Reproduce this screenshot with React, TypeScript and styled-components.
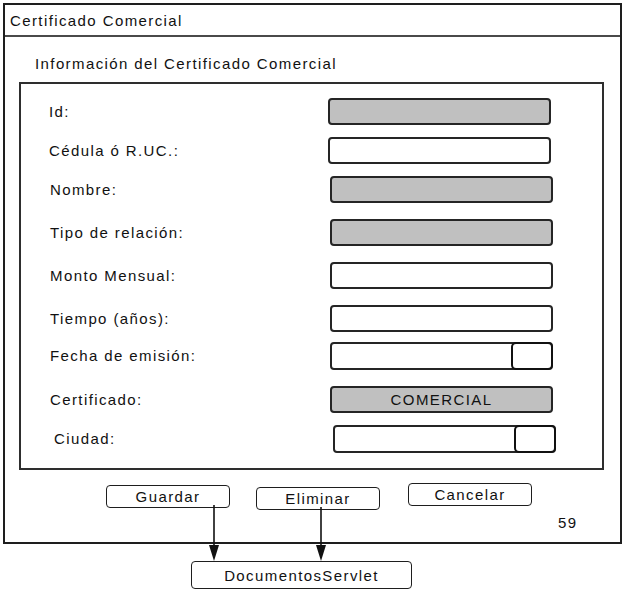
import React from 'react';
import styled, { createGlobalStyle } from 'styled-components';

const GlobalStyle = createGlobalStyle`
	html, body {
		margin: 0;
		padding: 0;
		background: #ffffff;
	}
	body {
		font-family: 'Liberation Sans', Arial, sans-serif;
		color: #111111;
		letter-spacing: 1.4px;
	}
`;

const Styled = {
	Page: styled.div`
		position: relative;
		width: 624px;
		height: 590px;
		padding: 3px 0 0 3px;
		box-sizing: border-box;
	`,
	Window: styled.div`
		width: 619px;
		height: 541px;
		border: 2px solid #1e1e1e;
		box-sizing: border-box;
		display: flex;
		flex-direction: column;
	`,
	TitleBar: styled.div`
		height: 30px;
		display: flex;
		align-items: center;
		padding-left: 5px;
		border-bottom: 2px solid #4a4a4a;
		font-size: 15px;
	`,
	Subtitle: styled.div`
		margin: 18px 0 0 30px;
		height: 18px;
		line-height: 18px;
		font-size: 15px;
	`,
	Panel: styled.div`
		margin: 9px 0 0 14px;
		width: 585px;
		height: 388px;
		border: 2px solid #2e2e2e;
		box-sizing: border-box;
		display: flex;
		flex-direction: column;
	`,
	Row: styled.div<{ $gap: number }>`
		display: flex;
		align-items: center;
		margin-top: ${props => props.$gap}px;
		height: 27px;
	`,
	Label: styled.div<{ $indent: number }>`
		width: ${props => 279 - props.$indent}px;
		padding-left: ${props => 28 + props.$indent}px;
		font-size: 15px;
		flex-shrink: 0;
		white-space: nowrap;
	`,
	Field: styled.div<{ $shift: number; $filled?: boolean }>`
		margin-left: ${props => props.$shift}px;
		width: 223px;
		height: 27px;
		border: 2px solid #252525;
		border-radius: 4px;
		box-sizing: border-box;
		background: ${props => (props.$filled ? '#c0c0c0' : '#ffffff')};
		display: flex;
		align-items: center;
		justify-content: center;
		font-size: 15px;
	`,
	PickerField: styled.div<{ $shift: number }>`
		margin-left: ${props => props.$shift}px;
		width: 223px;
		height: 28px;
		border: 2px solid #252525;
		border-radius: 4px;
		box-sizing: border-box;
		display: flex;
		justify-content: flex-end;
	`,
	PickerButton: styled.div`
		width: 42px;
		height: 28px;
		margin: -2px -2px -2px 0;
		border: 2px solid #111111;
		border-radius: 5px;
		box-sizing: border-box;
		background: #ffffff;
	`,
	ButtonRow: styled.div`
		display: flex;
		align-items: flex-start;
		margin: 13px 0 0 101px;
		height: 27px;
	`,
	Button: styled.div<{ $offset: number; $gap: number }>`
		margin-top: ${props => props.$offset}px;
		margin-left: ${props => props.$gap}px;
		width: 124px;
		height: 23px;
		border: 1.5px solid #1e1e1e;
		border-radius: 4px;
		box-sizing: border-box;
		display: flex;
		align-items: center;
		justify-content: center;
		font-size: 15px;
		background: #ffffff;
	`,
	PageNumber: styled.div`
		margin: 4px 0 0 553px;
		font-size: 15px;
		line-height: 18px;
	`,
	Servlet: styled.div`
		margin: 17px 0 0 188px;
		width: 221px;
		height: 28px;
		border: 1.5px solid #1e1e1e;
		border-radius: 4px;
		box-sizing: border-box;
		display: flex;
		align-items: center;
		justify-content: center;
		font-size: 15px;
	`,
	Arrows: styled.svg`
		position: absolute;
		left: 0;
		top: 0;
		pointer-events: none;
	`,
};

type FieldRow = {
	label: string;
	gap: number;
	indent: number;
	shift: number;
	kind: 'filled' | 'empty' | 'picker';
	value?: string;
};

const rows: Array<FieldRow> = [
	{ label: 'Id:', gap: 14, indent: 0, shift: 0, kind: 'filled' },
	{ label: 'Cédula ó R.UC.:', gap: 12, indent: 0, shift: 0, kind: 'empty' },
	{ label: 'Nombre:', gap: 12, indent: 1, shift: 2, kind: 'filled' },
	{ label: 'Tipo de relación:', gap: 16, indent: 1, shift: 2, kind: 'filled' },
	{ label: 'Monto Mensual:', gap: 16, indent: 1, shift: 2, kind: 'empty' },
	{ label: 'Tiempo (años):', gap: 16, indent: 1, shift: 2, kind: 'empty' },
	{ label: 'Fecha de emisión:', gap: 10, indent: 1, shift: 2, kind: 'picker' },
	{ label: 'Certificado:', gap: 17, indent: 1, shift: 2, kind: 'filled', value: 'COMERCIAL' },
	{ label: 'Ciudad:', gap: 12, indent: 5, shift: 5, kind: 'picker' },
];

const actions = [
	{ label: 'Guardar', offset: 2, gap: 0 },
	{ label: 'Eliminar', offset: 4, gap: 26 },
	{ label: 'Cancelar', offset: 0, gap: 28 },
];

// arrow from a button down to the servlet box
const Arrow = ({ x, from }: { x: number; from: number }) => (
	<g>
		<line x1={x} y1={from} x2={x} y2={546} stroke="#111" strokeWidth={1.6} />
		<polygon points={`${x - 5},545 ${x + 5},545 ${x},561`} fill="#111" />
	</g>
);

const App = () => {
	return (
		<>
			<GlobalStyle />
			<Styled.Page>
				<Styled.Window>
					<Styled.TitleBar>Certificado Comercial</Styled.TitleBar>
					<Styled.Subtitle>Información del Certificado Comercial</Styled.Subtitle>
					<Styled.Panel>
						{rows.map(row => (
							<Styled.Row key={row.label} $gap={row.gap}>
								<Styled.Label $indent={row.indent}>{row.label}</Styled.Label>
								{row.kind === 'picker' ? (
									<Styled.PickerField $shift={row.shift}>
										<Styled.PickerButton />
									</Styled.PickerField>
								) : (
									<Styled.Field $shift={row.shift} $filled={row.kind === 'filled'}>
										{row.value}
									</Styled.Field>
								)}
							</Styled.Row>
						))}
					</Styled.Panel>
					<Styled.ButtonRow>
						{actions.map(action => (
							<Styled.Button key={action.label} $offset={action.offset} $gap={action.gap}>
								{action.label}
							</Styled.Button>
						))}
					</Styled.ButtonRow>
					<Styled.PageNumber>59</Styled.PageNumber>
				</Styled.Window>
				<Styled.Servlet>DocumentosServlet</Styled.Servlet>
				<Styled.Arrows width={624} height={590}>
					<Arrow x={214} from={505} />
					<Arrow x={321} from={507} />
				</Styled.Arrows>
			</Styled.Page>
		</>
	);
};

export default App;
